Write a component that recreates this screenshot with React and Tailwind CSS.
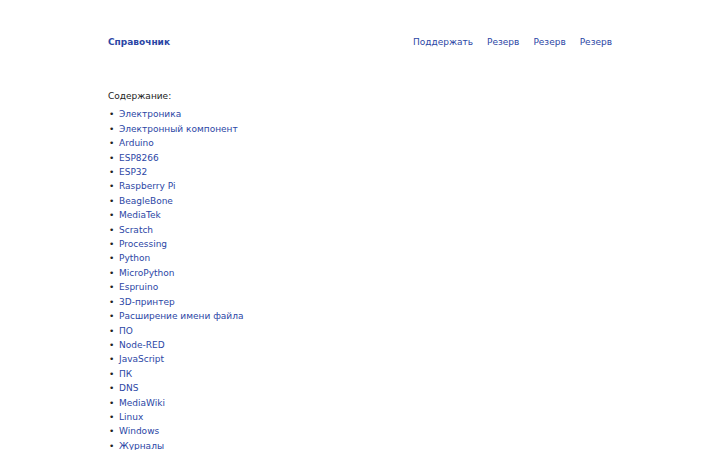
import React from 'react';

const items = [
  'Электроника',
  'Электронный компонент',
  'Arduino',
  'ESP8266',
  'ESP32',
  'Raspberry Pi',
  'BeagleBone',
  'MediaTek',
  'Scratch',
  'Processing',
  'Python',
  'MicroPython',
  'Espruino',
  '3D-принтер',
  'Расширение имени файла',
  'ПО',
  'Node-RED',
  'JavaScript',
  'ПК',
  'DNS',
  'MediaWiki',
  'Linux',
  'Windows',
  'Журналы',
];

export default function App() {
  return (
    <div className="min-h-screen bg-white font-['DejaVu_Sans',sans-serif] text-[9px] leading-[14.4px] text-[#222]">
      <div className="mx-auto w-[504px]">
        {/* Header */}
        <header className="flex items-center justify-between pt-[35px] h-[50px]">
          <a href="#" className="font-bold text-[#2b46a5]">Справочник</a>
          <nav className="flex gap-[14px] text-[#2b46a5]">
            <a href="#">Поддержать</a>
            <a href="#">Резерв</a>
            <a href="#">Резерв</a>
            <a href="#">Резерв</a>
          </nav>
        </header>

        {/* Contents */}
        <main className="pt-[39px]">
          <p className="mb-[4px]">Содержание:</p>
          <ul>
            {items.map((item, i) => (
              <li key={i} className="flex">
                <span className="w-[11px] pl-[1px]">•</span>
                <a href="#" className="text-[#2b46a5]">{item}</a>
              </li>
            ))}
          </ul>
        </main>
      </div>
    </div>
  );
}
